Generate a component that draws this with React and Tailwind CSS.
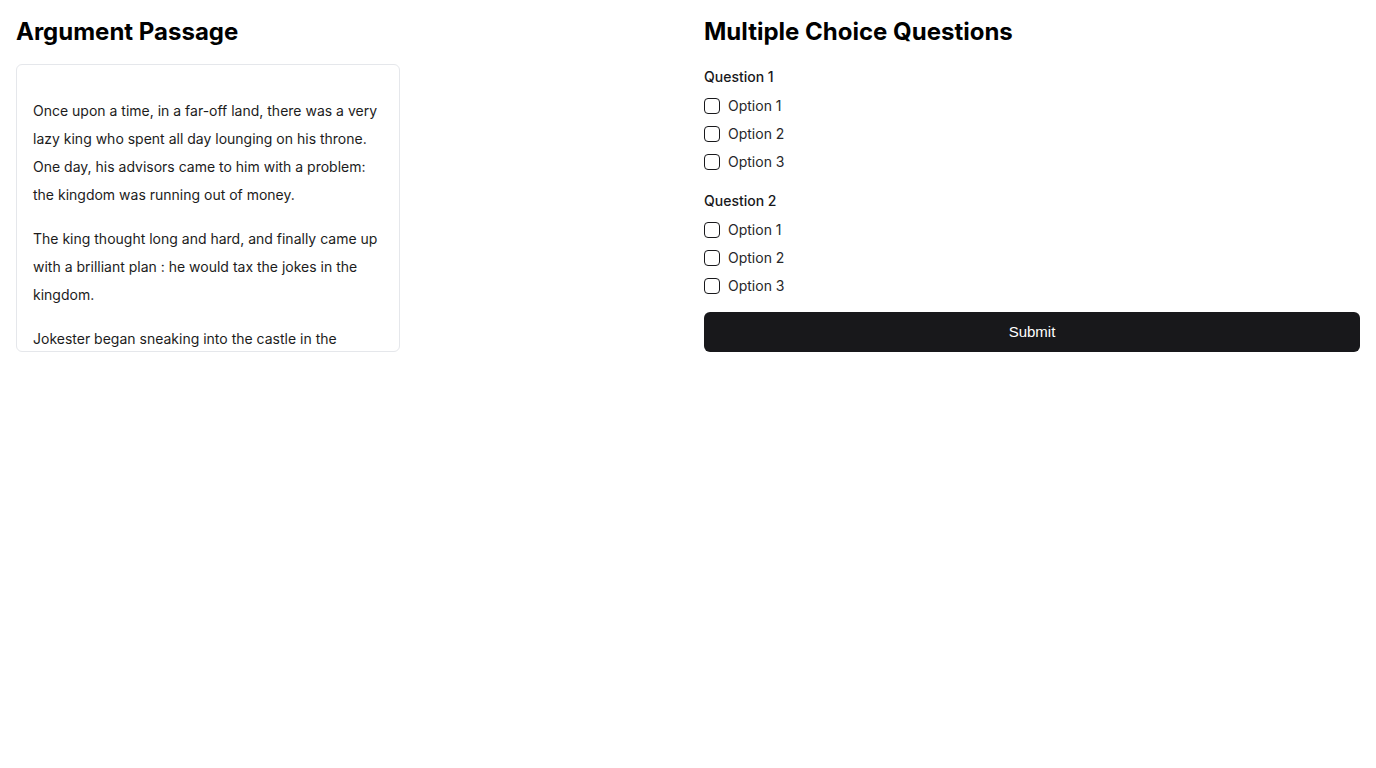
import { useState } from "react";

const questions = [
  { id: 1, label: "Question 1", options: ["Option 1", "Option 2", "Option 3"] },
  { id: 2, label: "Question 2", options: ["Option 1", "Option 2", "Option 3"] },
];

const paragraphs = [
  "Once upon a time, in a far-off land, there was a very lazy king who spent all day lounging on his throne. One day, his advisors came to him with a problem: the kingdom was running out of money.",
  "The king thought long and hard, and finally came up with a brilliant plan : he would tax the jokes in the kingdom.",
  "Jokester began sneaking into the castle in the",
];

const App = () => {
  const [answers, setAnswers] = useState({});

  const toggle = (qid, opt) => {
    setAnswers((prev) => {
      const key = `${qid}-${opt}`;
      return { ...prev, [key]: !prev[key] };
    });
  };

  return (
    <div
      className="grid grid-cols-2 gap-8 p-4 bg-white text-black"
      style={{ fontFamily: "Inter, 'Liberation Sans', sans-serif" }}
    >
      {/* passage */}
      <div>
        <h2 className="text-2xl font-bold mb-4">Argument Passage</h2>
        <div className="w-96 h-72 border border-gray-200 rounded-md overflow-hidden px-4 pt-8">
          <div className="space-y-4">
            {paragraphs.map((p, i) => (
              <p key={i} className="text-sm leading-7 text-[#1c1c1c]">
                {p}
              </p>
            ))}
          </div>
        </div>
      </div>

      {/* questions */}
      <div>
        <h2 className="text-2xl font-bold mb-[19px]">Multiple Choice Questions</h2>
        <div className="flex flex-col gap-[19px]">
          {questions.map((q) => (
            <div key={q.id}>
              <div className="text-sm font-medium leading-5 text-[#18181b]">{q.label}</div>
              <div className="mt-[9px] flex flex-col gap-2">
                {q.options.map((opt) => {
                  const checked = !!answers[`${q.id}-${opt}`];
                  return (
                    <label key={opt} className="flex items-center gap-2 h-5 cursor-pointer">
                      <button
                        type="button"
                        onClick={() => toggle(q.id, opt)}
                        className={`w-4 h-4 rounded-[4px] border border-[#18181b] ${
                          checked ? "bg-[#18181b]" : "bg-white"
                        }`}
                      />
                      <span className="text-sm leading-5 text-[#27272a]">{opt}</span>
                    </label>
                  );
                })}
              </div>
            </div>
          ))}
        </div>
        <button
          type="button"
          className="mt-4 w-full h-10 rounded-md bg-[#18181b] text-white text-[15px]"
          style={{ fontFamily: "'Liberation Sans', Arial, sans-serif" }}
        >
          Submit
        </button>
      </div>
    </div>
  );
};

export default App;
